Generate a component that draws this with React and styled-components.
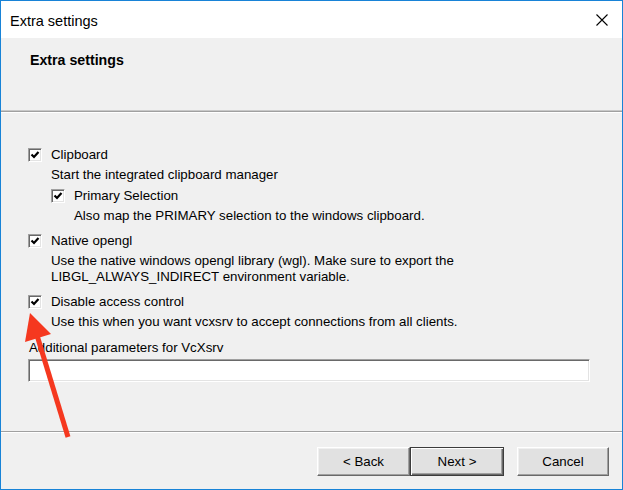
import styled, { createGlobalStyle } from "styled-components"

const GlobalStyle = createGlobalStyle`
  html, body {
    margin: 0;
    padding: 0;
    background: #ffffff;
  }
  * { box-sizing: border-box; }
`;

const Window = styled.div`
  position: relative;
  width: 623px;
  height: 490px;
  border: 1px solid #1883d7;
  background: #f0f0f0;
  display: flex;
  flex-direction: column;
  font-family: "Liberation Sans", Arial, sans-serif;
  color: #000;
  overflow: hidden;
`;

const TitleBar = styled.div`
  height: 37px;
  background: #ffffff;
  display: flex;
  align-items: center;
  justify-content: space-between;
  padding: 0 14px 0 9px;
`;

const TitleText = styled.span`
  font-size: 14.5px;
  padding-top: 2px;
`;

const CloseButton = styled.div`
  width: 12px;
  height: 12px;
  display: flex;
`;

const Header = styled.div`
  height: 75px;
  padding: 13px 0 0 29px;
  border-bottom: 1px solid #ffffff;
  box-shadow: inset 0 -1px 0 #a0a0a0, inset 0 -2px 0 #c8c8c8;
`;

const HeaderTitle = styled.h1`
  margin: 0;
  font-size: 14.2px;
  font-weight: 700;
  line-height: 18px;
`;

const Content = styled.div`
  flex: 1;
  padding: 33px 31px 0 27px;
  font-size: 13.3px;
`;

const Option = styled.div`
  margin-top: ${props => props.gap || 0}px;
  margin-left: ${props => props.indent || 0}px;
`;

const Row = styled.div`
  display: flex;
  align-items: center;
  height: 18px;
  gap: 9px;
`;

const Box = styled.span`
  width: 14px;
  height: 14px;
  background: #ffffff;
  border-top: 1px solid #a0a0a0;
  border-left: 1px solid #a0a0a0;
  border-right: 1px solid #ffffff;
  border-bottom: 1px solid #ffffff;
  box-shadow: inset 1px 1px 0 #696969, inset -1px -1px 0 #e3e3e3;
  display: flex;
  align-items: center;
  justify-content: center;
`;

const Label = styled.span`
  line-height: 18px;
`;

const Desc = styled.div`
  margin-top: 3px;
  padding-left: 23px;
  line-height: 16px;
`;

const FieldLabel = styled.div`
  margin-top: 10px;
  padding-left: 1px;
  line-height: 16px;
`;

const TextBox = styled.div`
  margin-top: 3px;
  height: 23px;
  width: 562px;
  background: #ffffff;
  border-top: 1px solid #a0a0a0;
  border-left: 1px solid #a0a0a0;
  border-right: 1px solid #ffffff;
  border-bottom: 1px solid #ffffff;
  box-shadow: inset 1px 1px 0 #696969, inset -1px -1px 0 #e3e3e3;
`;

const Footer = styled.div`
  height: 58px;
  border-top: 1px solid #a0a0a0;
  box-shadow: inset 0 1px 0 #ffffff;
  display: flex;
  justify-content: flex-end;
  padding: 15px 13px 0 0;
`;

const ButtonGroup = styled.div`
  display: flex;
  margin-right: 13px;
`;

const Button = styled.div`
  width: ${props => props.width || 93}px;
  height: 29px;
  display: flex;
  align-items: center;
  justify-content: center;
  font-size: 13.3px;
  background: #e1e1e1;
  border-top: 1px solid #ffffff;
  border-left: 1px solid #ffffff;
  border-right: 1px solid #696969;
  border-bottom: 1px solid #696969;
  box-shadow: inset -1px -1px 0 #a0a0a0, inset 1px 1px 0 #f0f0f0;
  ${props => props.primary && `
    border: 1px solid #3c3c3c;
    box-shadow: inset 1px 1px 0 #ffffff, inset -1px -1px 0 #696969, inset -2px -2px 0 #a0a0a0;
  `}
`;

const ArrowLayer = styled.svg`
  position: absolute;
  left: -1px;
  top: -1px;
  pointer-events: none;
`;

function Check() {
  return (
    <svg width="10" height="10" viewBox="0 0 10 10">
      <path d="M1.5 4.5 L4 7 L8.5 2" fill="none" stroke="#000" strokeWidth="2.2" />
    </svg>
  )
}

function CheckOption({ label, lines, gap, indent }) {
  return (
    <Option gap={gap} indent={indent}>
      <Row>
        <Box><Check /></Box>
        <Label>{label}</Label>
      </Row>
      <Desc>
        {lines.map(line => <div key={line}>{line}</div>)}
      </Desc>
    </Option>
  )
}

export default function App() {
  return (
    <>
      <GlobalStyle />
      <Window>
        <TitleBar>
          <TitleText>Extra settings</TitleText>
          <CloseButton>
            <svg width="12" height="12" viewBox="0 0 12 12">
              <path d="M0.5 0.5 L11.5 11.5 M11.5 0.5 L0.5 11.5" stroke="#000" strokeWidth="1.1" />
            </svg>
          </CloseButton>
        </TitleBar>
        <Header>
          <HeaderTitle>Extra settings</HeaderTitle>
        </Header>
        <Content>
          <CheckOption label="Clipboard" lines={["Start the integrated clipboard manager"]} />
          <CheckOption
            gap={4}
            indent={23}
            label="Primary Selection"
            lines={["Also map the PRIMARY selection to the windows clipboard."]}
          />
          <CheckOption
            gap={8}
            label="Native opengl"
            lines={[
              "Use the native windows opengl library (wgl). Make sure to export the",
              "LIBGL_ALWAYS_INDIRECT environment variable.",
            ]}
          />
          <CheckOption
            gap={8}
            label="Disable access control"
            lines={["Use this when you want vcxsrv to accept connections from all clients."]}
          />
          <FieldLabel>Additional parameters for VcXsrv</FieldLabel>
          <TextBox />
        </Content>
        <Footer>
          <ButtonGroup>
            <Button>&lt; Back</Button>
            <Button primary width={94}>Next &gt;</Button>
          </ButtonGroup>
          <Button width={92}>Cancel</Button>
        </Footer>
        <ArrowLayer width="623" height="490" viewBox="0 0 623 490">
          <line x1="68" y1="437" x2="36" y2="332" stroke="#f5381f" strokeWidth="5" />
          <polygon points="30,313 51,334 25,342" fill="#f5381f" />
        </ArrowLayer>
      </Window>
    </>
  )
}
